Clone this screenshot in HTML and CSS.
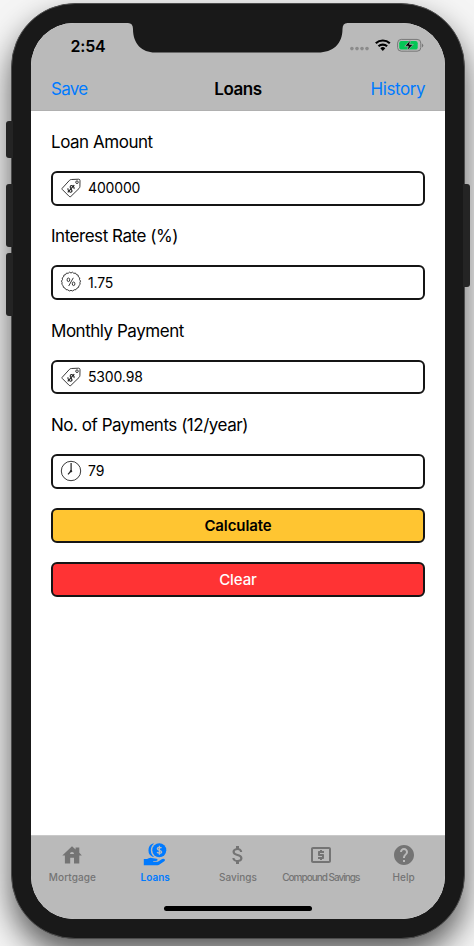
FILE: index.html
```html
<!DOCTYPE html>
<html lang="en">
<head>
<meta charset="utf-8">
<title>Loans</title>
<link rel="stylesheet" href="styles.css">
</head>
<body>
<svg class="defs" width="0" height="0" aria-hidden="true">
  <symbol id="tag" viewBox="0 0 22 22">
    <path d="M2.2 11.3 9.5 3.3Q10.2 2.6 11.4 2.5L18.6 2.2Q20 2.2 20 3.6L19.9 9.5Q19.8 10.6 19 11.5L10.800 19.5Q10 20.2 9.2 19.4L2.2 12.4Q1.7 11.8 2.2 11.3Z"/>
    <circle cx="17" cy="5.2" r="1.3"/>
    <path transform="rotate(42 11 11.8)" d="M13.3 9.9C12.8 8 8.700 8.100 8.700 10.200S13.500 11.300 13.500 13.500 9.200 15.400 8.500 13.400M11 6.900v9.800" class="bold"/>
  </symbol>
</svg>
<div class="phone">
  <i class="key key-mute"></i><i class="key key-up"></i><i class="key key-down"></i><i class="key key-power"></i>
  <div class="screen">
    <header class="top">
      <div class="status">
        <span class="time">2:54</span>
        <span class="signals">
          <svg width="74" height="14" viewBox="0 0 74 14">
            <g fill="#8b8b8b"><circle cx="1.9" cy="10.6" r="1.8"/><circle cx="7" cy="10.6" r="1.8"/><circle cx="12" cy="10.6" r="1.8"/><circle cx="17" cy="10.6" r="1.8"/></g>
            <g fill="none" stroke="#000" stroke-width="2.2"><path d="M25.8 5.3A10.2 10.2 0 0 1 39.8 5.3"/><path d="M28.5 8.3A6.3 6.3 0 0 1 37.1 8.3"/></g>
            <path d="M32.8 12.9 30.3 10.3A3.6 3.6 0 0 1 35.3 10.3Z"/>
            <rect x="47.6" y="1.4" width="23.2" height="11.8" rx="3.7" fill="none" stroke="#777" stroke-width="1"/>
            <rect x="49.2" y="3" width="18.5" height="8.6" rx="2.2" fill="#05c756"/>
            <path d="M72 5.500v4Q74.6 7.500 72 5.500Z" fill="#777"/>
            <path d="M60.5 2 54.8 8.2H58.3L57.3 12.6 63.2 6.4H59.5Z" stroke="#bababa" stroke-width=".7"/>
          </svg>
        </span>
      </div>
      <nav class="nav"><a class="save">Save</a><h1>Loans</h1><a class="history">History</a></nav>
    </header>
    <main>
      <label>Loan Amount</label>
      <div class="field"><svg class="ico" viewBox="0 0 22 22"><use href="#tag"/></svg><span>400000</span></div>
      <label>Interest Rate (%)</label>
      <div class="field"><svg class="ico" viewBox="0 0 22 22">
        <path d="M11 2Q12.6 .2 13.8 2.3Q16 1.3 16.4 3.6Q18.8 3.5 18.4 5.9Q20.6 6.6 19.5 8.6Q21.4 10 19.9 11.6Q20.9 13.7 18.9 14.6Q19.2 16.9 17 17.1Q16.3 19.4 14.2 18.8Q12.9 20.8 11 19.4Q9.1 20.8 7.8 18.8Q5.7 19.4 5 17.1Q2.8 16.9 3.1 14.6Q1.1 13.7 2.1 11.6Q.6 10 2.5 8.6Q1.4 6.6 3.6 5.9Q3.2 3.5 5.6 3.6Q6 1.3 8.2 2.3Q9.4 .2 11 2Z"/>
        <g><ellipse cx="8.4" cy="8.8" rx="1.3" ry="1.8"/><ellipse cx="13.6" cy="12.8" rx="1.3" ry="1.8"/><path d="m13.3 6.8-4.6 8.2"/></g></svg><span>1.75</span></div>
      <label>Monthly Payment</label>
      <div class="field"><svg class="ico" viewBox="0 0 22 22"><use href="#tag"/></svg><span>5300.98</span></div>
      <label>No. of Payments (12/year)</label>
      <div class="field"><svg class="ico" viewBox="0 0 22 22"><circle cx="11" cy="11" r="9.7"/><path d="M11.1 3v8L8 14.4" class="hands"/><circle cx="11" cy="11.2" r=".8" fill="#111"/></svg><span>79</span></div>
      <button class="btn calc">Calculate</button>
      <button class="btn clear">Clear</button>
    </main>
    <footer class="tabs">
      <a class="tab"><svg viewBox="0 0 24 24"><path fill-rule="evenodd" d="M2.3 12.4 12 3.2l3.6 3.3V4.6h3.7V9.8l2.600 2.600H19.3V20.6H14V14.8H10.200V20.6H4.9V12.4ZM10 11h4a2 2 0 0 0-4 0Z"/></svg><span class="t1">Mortgage</span></a>
      <a class="tab on"><svg viewBox="0 0 24 24"><circle cx="16.3" cy="7.3" r="7"/><path d="M10 .6A7.2 7.2 0 0 0 10 14L11 14A8.8 8.8 0 0 1 11 .5Z"/><path d="M18.5 5.2C17.9 4.2 14.3 3.9 14.3 5.8S18.6 6.9 18.6 8.9 14.8 10.4 14.1 9M16.4 2.8v9" fill="none" stroke="#bababa" stroke-width="1.3"/><path d="M.8 16.1h3.3l1.6-.9q1.4-.7 3-.2l4.8.8q1.4.4 1 1.5-.4.8-1.6.8h-2.700v.7h4.6l4.3-2.7q1.6-.8 2.6.2.8 1-.4 1.9l-4.8 3.4q-.8.7-2 .7H.8Z"/></svg><span class="t2">Loans</span></a>
      <a class="tab"><svg viewBox="0 0 24 24"><path d="M11.8 10.9c-2.27-.59-3-1.2-3-2.15 0-1.09 1.01-1.85 2.7-1.85 1.78 0 2.44.85 2.5 2.1h2.21c-.07-1.72-1.12-3.3-3.21-3.81V3h-3v2.16c-1.94.42-3.5 1.68-3.5 3.61 0 2.31 1.91 3.46 4.7 4.13 2.5.6 3 1.48 3 2.41 0 .69-.49 1.79-2.7 1.79-2.06 0-2.87-.92-2.98-2.1h-2.2c.12 2.19 1.76 3.42 3.68 3.83V21h3v-2.15c1.95-.37 3.5-1.5 3.5-3.55 0-2.84-2.43-3.81-4.7-4.4Z"/></svg><span>Savings</span></a>
      <a class="tab"><svg viewBox="0 0 24 24"><path d="M11 17h2v-1h1c.55 0 1-.45 1-1v-3c0-.55-.45-1-1-1h-3v-1h4V8h-2V7h-2v1h-1c-.55 0-1 .45-1 1v3c0 .55.45 1 1 1h3v1H9v2h2v1zm9-13H4c-1.11 0-2 .89-2 2v12c0 1.11.89 2 2 2h16c1.11 0 2-.89 2-2V6c0-1.11-.89-2-2-2zm0 14H4V6h16v12z"/></svg><span class="t4">Compound Savings</span></a>
      <a class="tab"><svg viewBox="0 0 24 24"><path d="M12 2C6.48 2 2 6.48 2 12s4.48 10 10 10 10-4.48 10-10S17.52 2 12 2zm1 17h-2v-2h2v2zm2.07-7.75-.9.92C13.45 12.9 13 13.5 13 15h-2v-.5c0-1.1.45-2.1 1.17-2.83l1.24-1.26c.37-.36.59-.86.59-1.41 0-1.1-.9-2-2-2s-2 .9-2 2H8c0-2.21 1.79-4 4-4s4 1.79 4 4c0 .88-.36 1.68-.93 2.25z"/></svg><span>Help</span></a>
      <i class="home"></i>
    </footer>
    <svg class="notch" width="220" height="31" viewBox="0 0 220 31"><path d="M0 0V1Q5 1 5 7C5 22 14 30.5 27 30.5H190C205 30.5 214.5 22 214.5 7Q214.5 1 219.5 1V0Z" fill="#191919"/></svg>
  </div>
</div>
</body>
</html>
```

FILE: styles.css
```css
* { box-sizing: border-box; }
html, body { margin: 0; height: 946px; overflow: hidden; background: #f5f5f5; }
body { font-family: Inter, "Liberation Sans", sans-serif; padding: 3px 9px 7px 11px; color: #000; }
.defs { position: absolute; }
.phone {
  position: relative; width: 454px; height: 936px; padding: 19px;
  background: #191919; border: 1px solid #4c4c4c; border-radius: 64px;
  box-shadow: 0 16px 32px rgba(0, 0, 0, .64);
}
.key { position: absolute; width: 7px; background: #242424; border-radius: 3px 0 0 3px; left: -6px; }
.key-mute { top: 117px; height: 37px; }
.key-up { top: 180px; height: 63px; }
.key-down { top: 249px; height: 63px; }
.key-power { left: auto; right: -6px; top: 180px; height: 103px; border-radius: 0 3px 3px 0; }
.screen {
  position: relative; width: 414px; height: 896px; overflow: hidden;
  border-radius: 43px; background: #fff; display: flex; flex-direction: column;
}
.notch { position: absolute; left: 97px; top: -1px; }
.top { height: 88px; background: #bababa; border-bottom: 1px solid #b0b0b0; }
.status { height: 44px; display: flex; justify-content: space-between; padding: 0 21px 0 39.5px; }
.time { font-size: 16px; line-height: 20px; font-weight: 600; margin-top: 13px; letter-spacing: -.2px; }
.signals { margin-top: 15px; }
.signals svg { display: block; }
.nav { height: 44px; display: grid; grid-template-columns: 1fr auto 1fr; padding: 0 20px; align-items: center; font-size: 17px; letter-spacing: -.45px; color: #007aff; }
.nav h1 { margin: 0; color: #000; font-size: 17px; font-weight: 600; }
.save { letter-spacing: -.7px; }
.history { text-align: right; }
main { flex: 1; padding: 21px 20px 0; display: flex; flex-direction: column; }
label { font-size: 17px; line-height: 20px; height: 20px; flex: none; margin-bottom: 19.2px; white-space: nowrap; letter-spacing: -.47px; }
.field { height: 34.5px; flex: none; margin-bottom: 20.6px; border: 2px solid #151515; border-radius: 6px; display: flex; align-items: center; padding: 0 0 1px 7px; font-size: 14px; letter-spacing: -.15px; }
.ico { width: 22px; height: 22px; margin-right: 6px; fill: none; stroke: #222; stroke-width: .9; }
.bold { stroke-width: 1.1; }
.hands { stroke-width: 1.2; }
.btn { height: 34.5px; flex: none; margin: -.8px 0 20.3px; padding: 0; border: 2px solid #151515; border-radius: 6px; font: 600 15px Inter, sans-serif; letter-spacing: -.1px; }
.calc { background: #ffc531; color: #000; }
.clear { background: #ff3334; color: #fff; font-weight: 500; }
.tabs { position: relative; height: 84px; background: #bababa; border-top: 1px solid #c9c9c9; display: flex; }
.tab { width: 82.8px; height: 50px; display: flex; flex-direction: column; align-items: center; padding-top: 7px; color: #747474; font-size: 10px; font-weight: 500; line-height: 14px; white-space: nowrap; }
.tab svg { width: 24px; height: 24px; margin-bottom: 3px; fill: currentColor; flex: none; }
.on { color: #007aff; font-weight: 600; }
.home { position: absolute; left: 133px; top: 70px; width: 148px; height: 5px; border-radius: 3px; background: #000; }
.t1 { letter-spacing: .1px; }
.t4 { letter-spacing: -1px; }
```
